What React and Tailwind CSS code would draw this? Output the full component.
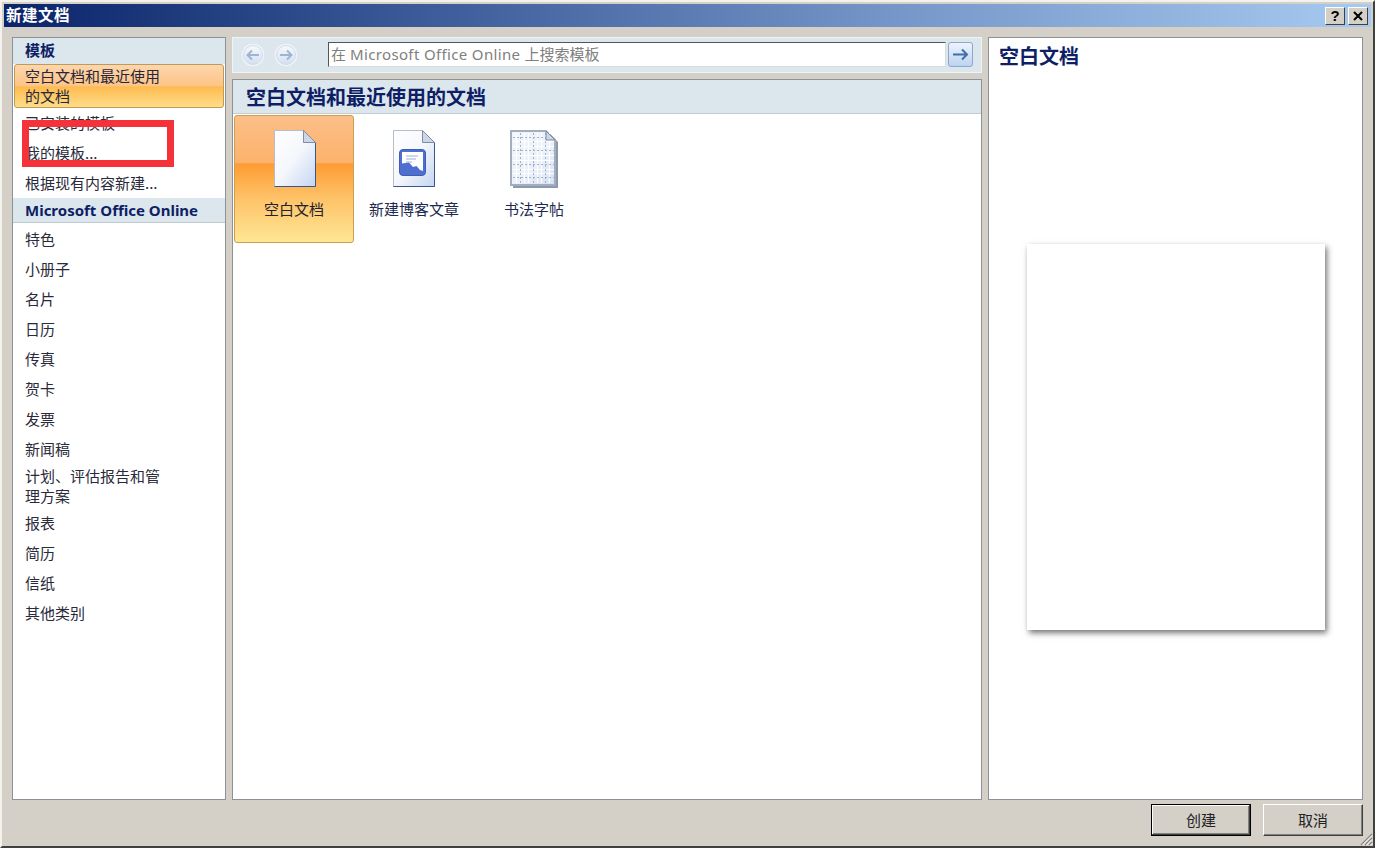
const CJK = "font-['Noto_Sans_CJK_SC','Liberation_Sans',sans-serif]";

function NavCircle({ dir }) {
  return (
    <div className="w-[26px] h-[26px]">
      <svg width="26" height="26" viewBox="0 0 26 26">
        <defs>
          <linearGradient id={"nav" + dir} x1="0" y1="0" x2="0" y2="1">
            <stop offset="0" stopColor="#f6f9fc" />
            <stop offset="1" stopColor="#d3e0f0" />
          </linearGradient>
        </defs>
        <circle cx="13" cy="13" r="12" fill="#eff3f8" stroke="#dce4ee" />
        <circle cx="13" cy="13" r="9.5" fill={"url(#nav" + dir + ")"} stroke="#d2dcea" />
        <g transform={dir === "l" ? "" : "translate(26 0) scale(-1 1)"}>
          <path d="M19 13H8M12 8.5L7.5 13l4.5 4.5" fill="none" stroke="#9fb3d2" strokeWidth="2" />
        </g>
      </svg>
    </div>
  );
}

function PageShape({ id, children, dx = 0 }) {
  return (
    <svg width="60" height="66" viewBox="0 0 60 66">
      <defs>
        <linearGradient id={id} x1="0" y1="0" x2="1" y2="1">
          <stop offset="0" stopColor="#ffffff" />
          <stop offset="0.5" stopColor="#f4f7fc" />
          <stop offset="1" stopColor="#c4d5f0" />
        </linearGradient>
      </defs>
      <g transform={`translate(${dx} 0)`}>
        <path d="M10.5 2.5H39.5L51.5 14.5V58.5H10.5Z" fill={"url(#" + id + ")"} stroke="#b6bdc9" />
        <path d="M10.5 58.5H51.5V14.5" fill="none" stroke="#3a5590" />
        <path d="M39.5 2.5V14.5H51.5Z" fill="#cdd6e6" stroke="#7f8ca3" />
        {children}
      </g>
    </svg>
  );
}

function BlankIcon() {
  return <PageShape id="pgBlank" />;
}

function BlogIcon() {
  return (
    <PageShape id="pgBlog" dx={-1}>
      <rect x="16.5" y="21.5" width="26" height="26" rx="3.5" fill="#4f6fd0" stroke="#3f5cb5" />
      <path d="M19 24H40V43L37 42 33.5 38 30 39 26 34.5 19 35.5Z" fill="#fff" />
      <path d="M23 28H35M23 31H33M23 34H29" stroke="#9bb0d8" strokeWidth="1" />
    </PageShape>
  );
}

function GridIcon() {
  const faintX = [12, 20, 24, 33, 37, 45];
  const faintY = [13, 18, 27, 32, 41, 45];
  const dotX = [16, 29, 41];
  const dotY = [9, 22, 36, 49];
  return (
    <svg width="60" height="66" viewBox="0 0 60 66">
      <defs>
        <linearGradient id="pgGrid" x1="0" y1="0" x2="1" y2="1">
          <stop offset="0" stopColor="#f2f6fc" />
          <stop offset="0.6" stopColor="#eaf0fa" />
          <stop offset="1" stopColor="#d5e0f2" />
        </linearGradient>
      </defs>
      <path d="M9 5H45L54 14V60H9Z" fill="#8e98ab" />
      <path d="M7 3H42L51 12V57H7Z" fill="url(#pgGrid)" stroke="#a3adbd" strokeWidth="2" />
      {faintX.map((x) => <path key={x} d={`M${x}.5 5V55`} stroke="#ffffff" />)}
      {faintY.map((y) => <path key={y} d={`M9 ${y}.5H50`} stroke="#ffffff" />)}
      {dotX.map((x) => <path key={x} d={`M${x}.5 5V55`} stroke="#a3b2cc" strokeDasharray="2 2" />)}
      {dotY.map((y) => <path key={y} d={`M9 ${y}.5H50`} stroke="#a3b2cc" strokeDasharray="2 2" />)}
      <path d="M42 3V12H51Z" fill="#cdd6e6" stroke="#7f8ca3" />
    </svg>
  );
}

function Row({ children, two }) {
  return (
    <div className={(two ? "h-[44px] " : "h-[30px] ") + "flex items-center pl-[12px] text-[15px] leading-[20px] text-[#2a2a3a]"}>
      <span className="block w-[140px]">{children}</span>
    </div>
  );
}

function Tile({ icon, label, active }) {
  return (
    <div
      className={
        "w-[120px] h-[128px] flex flex-col items-center pt-[14px] rounded-[3px] " +
        (active
          ? "bg-[linear-gradient(180deg,#fbbf88_0%,#fdb26c_37%,#fd9c33_38%,#fec268_65%,#fee694_100%)] border border-[#c9a050]"
          : "border border-transparent")
      }
    >
      <div className="h-[66px] -mt-[2px] flex items-start">{icon}</div>
      <div className={"mt-[5px] text-[15px] leading-[20px] " + (active ? "text-[#22222a]" : "text-[#1c2a50]")}>{label}</div>
    </div>
  );
}

export default function App() {
  const items1 = ["特色", "小册子", "名片", "日历", "传真", "贺卡", "发票", "新闻稿"];
  const items2 = ["报表", "简历", "信纸", "其他类别"];
  return (
    <div className={"relative w-[1375px] h-[848px] overflow-hidden bg-[#d4d0c8] border-t-2 border-l-2 border-t-[#f4f2ec] border-l-[#f4f2ec] border-r-2 border-b-2 border-r-[#404040] border-b-[#404040] pt-[2px] " + CJK}>
      <div className="mx-[2px] h-[23px] flex items-center justify-between bg-[linear-gradient(90deg,#0a246a_0%,#3a5a98_30%,#7596c8_65%,#a6caf0_100%)]">
        <span className="pl-[2px] pb-[3px] text-[15.5px] leading-[20px] font-bold tracking-[0.5px] text-white">新建文档</span>
        <div className="flex gap-[3px] pr-[3px]">
          <div className="w-[20px] h-[18px] flex items-center justify-center bg-[#d4d0c8] border border-t-white border-l-white border-r-[#404040] border-b-[#404040] font-['Liberation_Sans',sans-serif] text-[15px] font-bold leading-none text-black">?</div>
          <div className="w-[20px] h-[18px] flex items-center justify-center bg-[#d4d0c8] border border-t-white border-l-white border-r-[#404040] border-b-[#404040]">
            <svg width="10" height="10" viewBox="0 0 10 10"><path d="M1 1L9 9M9 1L1 9" stroke="#000" strokeWidth="2" /></svg>
          </div>
        </div>
      </div>

      <div className="flex gap-[6px] pl-[10px] pt-[10px]">
        {/* left */}
        <div className="w-[214px] h-[763px] bg-white border border-[#8c9299] flex flex-col">
          <div className="h-[26px] flex items-center pl-[12px] pb-[2px] bg-[#dce6ed] text-[15px] font-bold text-[#0e1f66]">模板</div>
          <div className="ml-[1px] mr-[1px] h-[44px] pl-[10px] flex items-center rounded-[3px] border border-[#c09a58] bg-[linear-gradient(180deg,#fdd6ac_0%,#fdc486_50%,#fdbb50_52%,#fedd88_100%)] text-[15px] leading-[20px] text-[#26263a]">
            <span className="block w-[140px]">空白文档和最近使用的文档</span>
          </div>
          <Row>已安装的模板</Row>
          <Row>我的模板...</Row>
          <Row>根据现有内容新建...</Row>
          <div className="h-[25px] flex items-center pl-[12px] bg-[#dce6ed] border-b border-[#c2cad2] font-['Noto_Sans',sans-serif] text-[15px] font-bold text-[#0e1f66]">Microsoft Office Online</div>
          <div className="h-[1px]" />
          {items1.map((t) => <Row key={t}>{t}</Row>)}
          <Row two>计划、评估报告和管理方案</Row>
          {items2.map((t) => <Row key={t}>{t}</Row>)}
        </div>

        {/* center */}
        <div className="w-[750px] flex flex-col gap-[6px]">
          <div className="h-[36px] bg-[#dce6ed] border border-[#eef3f7] flex items-center pl-[7px] pb-[1px]">
            <NavCircle dir="l" />
            <div className="w-[7px]" />
            <NavCircle dir="r" />
            <div className="w-[29px]" />
            <div className="w-[618px] h-[25px] bg-white border border-t-[#555] border-l-[#555] border-r-[#d8dde2] border-b-[#d8dde2] flex items-center pl-[2px] pb-[1px] font-['Noto_Sans','Noto_Sans_CJK_SC',sans-serif] text-[15px] text-[#808080] whitespace-nowrap">
              在 <span className="tracking-[0.35px] px-[4px]">Microsoft Office Online</span> 上搜索模板
            </div>
            <div className="ml-[2px] w-[25px] h-[25px] rounded-[3px] border border-[#8ea6c8] bg-[linear-gradient(180deg,#eef4fc_0%,#bcd3f0_100%)] flex items-center justify-center">
              <svg width="17" height="13" viewBox="0 0 17 13"><path d="M1 6.5H15M10 1.5L15 6.5 10 11.5" fill="none" stroke="#3f6ea8" strokeWidth="2" /></svg>
            </div>
          </div>
          <div className="h-[721px] bg-white border border-[#8c9299] flex flex-col">
            <div className="h-[34px] flex items-center pl-[13px] bg-[#dce6ed] border-b border-[#c2cad2] text-[20px] font-bold text-[#0e1f66]">空白文档和最近使用的文档</div>
            <div className="flex pl-[1px] pt-[1px]">
              <Tile active icon={<BlankIcon />} label="空白文档" />
              <Tile icon={<BlogIcon />} label="新建博客文章" />
              <Tile icon={<GridIcon />} label="书法字帖" />
            </div>
          </div>
        </div>

        {/* right */}
        <div className="w-[375px] h-[763px] bg-white border border-[#8c9299] flex flex-col">
          <div className="h-[37px] flex items-center pl-[10px] pb-[2px] text-[20px] font-bold text-[#0e1f66]">空白文档</div>
          <div className="flex-1 flex items-center justify-center">
            <div className="w-[298px] h-[386px] bg-white shadow-[2px_3px_6px_rgba(0,0,0,0.55)]" />
          </div>
        </div>
      </div>

      <div className="flex justify-end gap-[12px] pr-[10px] pt-[4px]">
        <div className="w-[100px] h-[32px] flex items-center justify-center bg-[#d4d0c8] border border-black shadow-[inset_-1px_-1px_0_#404040,inset_1px_1px_0_#fff,inset_-2px_-2px_0_#808080] text-[15px] text-[#222]">创建</div>
        <div className="w-[100px] h-[32px] flex items-center justify-center bg-[#d4d0c8] border border-t-white border-l-white border-r-[#404040] border-b-[#404040] shadow-[inset_-1px_-1px_0_#808080] text-[15px] text-[#222]">取消</div>
      </div>

      <svg className="absolute right-0 bottom-0" width="14" height="14" viewBox="0 0 14 14">
        <path d="M13 2L2 13M13 6L6 13M13 10L10 13" stroke="#808080" strokeWidth="1.2" />
        <path d="M13 3.5L3.5 13M13 7.5L7.5 13M13 11.5L11.5 13" stroke="#fff" strokeWidth="1" />
      </svg>

      <div className="absolute left-[20px] top-[118px] w-[152px] h-[47px] border-[7px] border-[#f5313a]" />
    </div>
  );
}
